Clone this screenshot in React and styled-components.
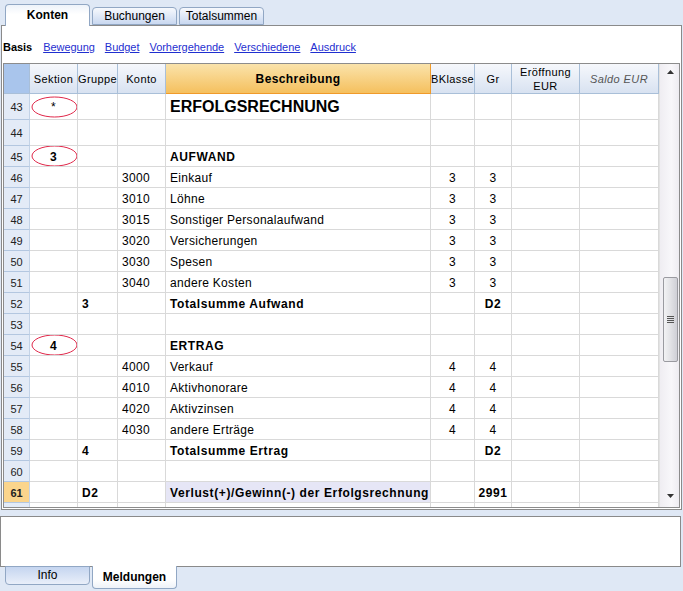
import React from 'react';
import styled, { createGlobalStyle } from 'styled-components';

const GlobalStyle = createGlobalStyle`
  html, body {
    margin: 0;
    padding: 0;
    background: #dfe8f5;
  }
  body {
    font-family: "Liberation Sans", Arial, sans-serif;
    font-size: 12px;
    color: #000;
  }
  * { box-sizing: border-box; }
`;

const COLS = '26px 48px 40px 48px 265px 44px 37px 68px 79px';

const rows = [
  { n: 43, h: 26, sek: '*', big: 'ERFOLGSRECHNUNG' },
  { n: 44, h: 26 },
  { n: 45, sek: '3', besch: 'AUFWAND', bold: true },
  { n: 46, konto: '3000', besch: 'Einkauf', bk: '3', gr: '3' },
  { n: 47, konto: '3010', besch: 'Löhne', bk: '3', gr: '3' },
  { n: 48, konto: '3015', besch: 'Sonstiger Personalaufwand', bk: '3', gr: '3' },
  { n: 49, konto: '3020', besch: 'Versicherungen', bk: '3', gr: '3' },
  { n: 50, konto: '3030', besch: 'Spesen', bk: '3', gr: '3' },
  { n: 51, konto: '3040', besch: 'andere Kosten', bk: '3', gr: '3' },
  { n: 52, grp: '3', besch: 'Totalsumme Aufwand', gr: 'D2', bold: true },
  { n: 53 },
  { n: 54, sek: '4', besch: 'ERTRAG', bold: true },
  { n: 55, konto: '4000', besch: 'Verkauf', bk: '4', gr: '4' },
  { n: 56, konto: '4010', besch: 'Aktivhonorare', bk: '4', gr: '4' },
  { n: 57, konto: '4020', besch: 'Aktivzinsen', bk: '4', gr: '4' },
  { n: 58, konto: '4030', besch: 'andere Erträge', bk: '4', gr: '4' },
  { n: 59, grp: '4', besch: 'Totalsumme Ertrag', gr: 'D2', bold: true },
  { n: 60 },
  { n: 61, grp: 'D2', besch: 'Verlust(+)/Gewinn(-) der Erfolgsrechnung', gr: '2991', bold: true, current: true },
  { n: null },
];

const Screen = styled.div`
  width: 683px;
  height: 591px;
  overflow: hidden;
  display: flex;
  flex-direction: column;
`;

const TabBar = styled.div`
  height: 25px;
  display: flex;
  align-items: flex-end;
  gap: 2px;
  padding-left: 5px;
  position: relative;
  z-index: 2;
`;

const TopTab = styled.div`
  width: 85px;
  height: ${(p) => (p.$active ? '22px' : '18px')};
  margin-bottom: ${(p) => (p.$active ? '-1px' : '0')};
  border: 1px solid #91a7c4;
  border-bottom: ${(p) => (p.$active ? 'none' : '1px solid #91a7c4')};
  border-radius: 4px 4px 0 0;
  background: ${(p) =>
    p.$active
      ? 'linear-gradient(#eef3fa, #ffffff 45%)'
      : 'linear-gradient(#f7f9fd, #c9d8f0)'};
  font-weight: ${(p) => (p.$active ? 'bold' : 'normal')};
  font-size: 12px;
  display: flex;
  align-items: center;
  justify-content: center;
  padding-bottom: ${(p) => (p.$active ? '2px' : '0')};
`;

const Panel = styled.div`
  margin-left: 1px;
  width: 681px;
  height: 485px;
  border: 1px solid #8a8a8a;
  background: #fff;
  display: flex;
  flex-direction: column;
  padding: 0 1px 1px 1px;
`;

const LinkBar = styled.div`
  height: 37px;
  display: flex;
  align-items: center;
  gap: 10px;
  padding: 5px 0 0 0;
  font-size: 11px;
  letter-spacing: -0.04px;
`;

const ViewLabel = styled.span`
  font-weight: bold;
  margin-right: 1px;
`;

const ViewLink = styled.a`
  color: #1f2fd0;
  text-decoration: underline;
  cursor: pointer;
`;

const TableFrame = styled.div`
  height: 445px;
  border: 1px solid #8c8c8c;
  display: flex;
  overflow: hidden;
`;

const Grid = styled.div`
  width: 655px;
  overflow: hidden;
  display: flex;
  flex-direction: column;
`;

const Row = styled.div`
  display: grid;
  grid-template-columns: ${COLS};
  height: ${(p) => p.$h}px;
  flex: none;
`;

const HeadCell = styled.div`
  border-right: 1px solid ${(p) => (p.$accent ? '#f09a2a' : '#a9bfd8')};
  border-bottom: 1px solid ${(p) => (p.$accent ? '#f09a2a' : '#a9bfd8')};
  background: ${(p) =>
    p.$corner
      ? '#a9c5ec'
      : p.$accent
      ? 'linear-gradient(#fae3ab, #f5c05e)'
      : 'linear-gradient(#f6f8fc, #d8e2f1)'};
  font-weight: ${(p) => (p.$accent ? 'bold' : 'normal')};
  font-style: ${(p) => (p.$italic ? 'italic' : 'normal')};
  color: ${(p) => (p.$italic ? '#555' : '#000')};
  display: flex;
  align-items: center;
  justify-content: ${(p) => (p.$left ? 'flex-start' : 'center')};
  text-align: center;
  line-height: 14px;
  overflow: hidden;
  white-space: nowrap;
  font-size: ${(p) => (p.$accent ? '12px' : '11px')};
  letter-spacing: 0.4px;
`;

const NumCell = styled.div`
  background: ${(p) => (p.$current ? '#fbd58c' : '#e3ebf7')};
  border-right: 1px solid #c3d3e7;
  border-bottom: 1px solid #b3c7e0;
  display: flex;
  align-items: center;
  justify-content: center;
  font-size: 11px;
  font-weight: ${(p) => (p.$current ? 'bold' : 'normal')};
  color: #222;
  padding-top: 1px;
`;

const Cell = styled.div`
  position: relative;
  border-right: 1px solid #d9d9d9;
  border-bottom: 1px solid #d9d9d9;
  background: ${(p) => p.$bg || '#fff'};
  display: flex;
  align-items: center;
  justify-content: ${(p) => (p.$center ? 'center' : 'flex-start')};
  padding: ${(p) => (p.$center ? '1px 0 0' : '1px 4px 0')};
  font-weight: ${(p) => (p.$bold ? 'bold' : 'normal')};
  font-size: ${(p) => (p.$big ? '16px' : '12px')};
  letter-spacing: ${(p) => (p.$big ? '0' : p.$bold ? '0.6px' : '0.3px')};
  white-space: nowrap;
  overflow: hidden;
`;

const Mark = styled.svg`
  position: absolute;
  left: 1px;
  top: 50%;
  margin-top: -11px;
  width: 47px;
  height: 22px;
  pointer-events: none;
`;

const CellText = styled.span`
  position: relative;
  font-weight: ${(p) => (p.$bold ? 'bold' : 'normal')};
`;

const Scrollbar = styled.div`
  width: 20px;
  background: linear-gradient(90deg, #efedf2, #f8f7fa 60%, #eeecf1);
  border-left: 1px solid #e2e2e2;
  display: flex;
  flex-direction: column;
  align-items: center;
  padding: 6px 0 9px 1px;
`;

const Arrow = styled.svg`
  width: 7px;
  height: 4px;
  flex: none;
`;

const Track = styled.div`
  flex: 1;
  display: flex;
  flex-direction: column;
  align-items: center;
  padding-top: 203px;
`;

const Thumb = styled.div`
  width: 15px;
  height: 85px;
  border: 1px solid #9a9aa0;
  border-radius: 2px;
  background: linear-gradient(90deg, #f2f2f4, #e2e2e6 50%, #cfcfd6);
  display: flex;
  flex-direction: column;
  align-items: center;
  justify-content: center;
  gap: 1px;
`;

const Grip = styled.div`
  width: 7px;
  height: 1px;
  background: #555;
`;

const Spacer = styled.div`
  height: 6px;
  flex: none;
`;

const MessageBox = styled.div`
  width: 681px;
  height: 51px;
  border: 1px solid #8a8a8a;
  background: #fff;
  flex: none;
`;

const BottomBar = styled.div`
  display: flex;
  gap: 2px;
  padding-left: 5px;
  margin-top: -1px;
`;

const BottomTab = styled.div`
  width: 85px;
  height: ${(p) => (p.$active ? '23px' : '19px')};
  border: 1px solid #91a7c4;
  border-top: ${(p) => (p.$active ? 'none' : '1px solid #91a7c4')};
  border-radius: 0 0 4px 4px;
  background: ${(p) =>
    p.$active ? 'linear-gradient(#ffffff 60%, #eef2f8)' : 'linear-gradient(#c5d5f0, #e9eff9)'};
  font-weight: ${(p) => (p.$active ? 'bold' : 'normal')};
  font-size: 12px;
  display: flex;
  align-items: center;
  justify-content: center;
  padding-bottom: ${(p) => (p.$active ? '0' : '2px')};
`;

const Ellipse = () => (
  <Mark viewBox="0 0 47 22">
    <ellipse cx="23.5" cy="11" rx="22.5" ry="10" fill="none" stroke="#e0284a" strokeWidth="1" />
  </Mark>
);

const DataRow = ({ r }) => (
  <Row $h={r.h || 21}>
    <NumCell $current={r.current}>{r.n}</NumCell>
    <Cell $center>
      {r.sek && <Ellipse />}
      {r.sek && <CellText $bold={r.sek !== '*'}>{r.sek}</CellText>}
    </Cell>
    <Cell $bold>{r.grp}</Cell>
    <Cell>{r.konto}</Cell>
    <Cell $bold={r.bold || r.big} $big={!!r.big} $bg={r.current ? '#e6e6f6' : undefined}>
      {r.big || r.besch}
    </Cell>
    <Cell $center>{r.bk}</Cell>
    <Cell $center $bold={r.bold}>{r.gr}</Cell>
    <Cell />
    <Cell />
  </Row>
);

const App = () => (
  <Screen>
    <GlobalStyle />
    <TabBar>
      <TopTab $active>Konten</TopTab>
      <TopTab>Buchungen</TopTab>
      <TopTab>Totalsummen</TopTab>
    </TabBar>
    <Panel>
      <LinkBar>
        <ViewLabel>Basis</ViewLabel>
        <ViewLink>Bewegung</ViewLink>
        <ViewLink>Budget</ViewLink>
        <ViewLink>Vorhergehende</ViewLink>
        <ViewLink>Verschiedene</ViewLink>
        <ViewLink>Ausdruck</ViewLink>
      </LinkBar>
      <TableFrame>
        <Grid>
          <Row $h={30}>
            <HeadCell $corner />
            <HeadCell>Sektion</HeadCell>
            <HeadCell $left>Gruppe</HeadCell>
            <HeadCell>Konto</HeadCell>
            <HeadCell $accent>Beschreibung</HeadCell>
            <HeadCell>BKlasse</HeadCell>
            <HeadCell>Gr</HeadCell>
            <HeadCell>
              Eröffnung
              <br />
              EUR
            </HeadCell>
            <HeadCell $italic>Saldo EUR</HeadCell>
          </Row>
          {rows.map((r, i) => (
            <DataRow key={i} r={r} />
          ))}
        </Grid>
        <Scrollbar>
          <Arrow viewBox="0 0 7 4">
            <path d="M3.5 0L7 4H0z" fill="#333" />
          </Arrow>
          <Track>
            <Thumb>
              <Grip />
              <Grip />
              <Grip />
              <Grip />
            </Thumb>
          </Track>
          <Arrow viewBox="0 0 7 4">
            <path d="M0 0H7L3.5 4z" fill="#333" />
          </Arrow>
        </Scrollbar>
      </TableFrame>
    </Panel>
    <Spacer />
    <MessageBox />
    <BottomBar>
      <BottomTab>Info</BottomTab>
      <BottomTab $active>Meldungen</BottomTab>
    </BottomBar>
  </Screen>
);

export default App;
